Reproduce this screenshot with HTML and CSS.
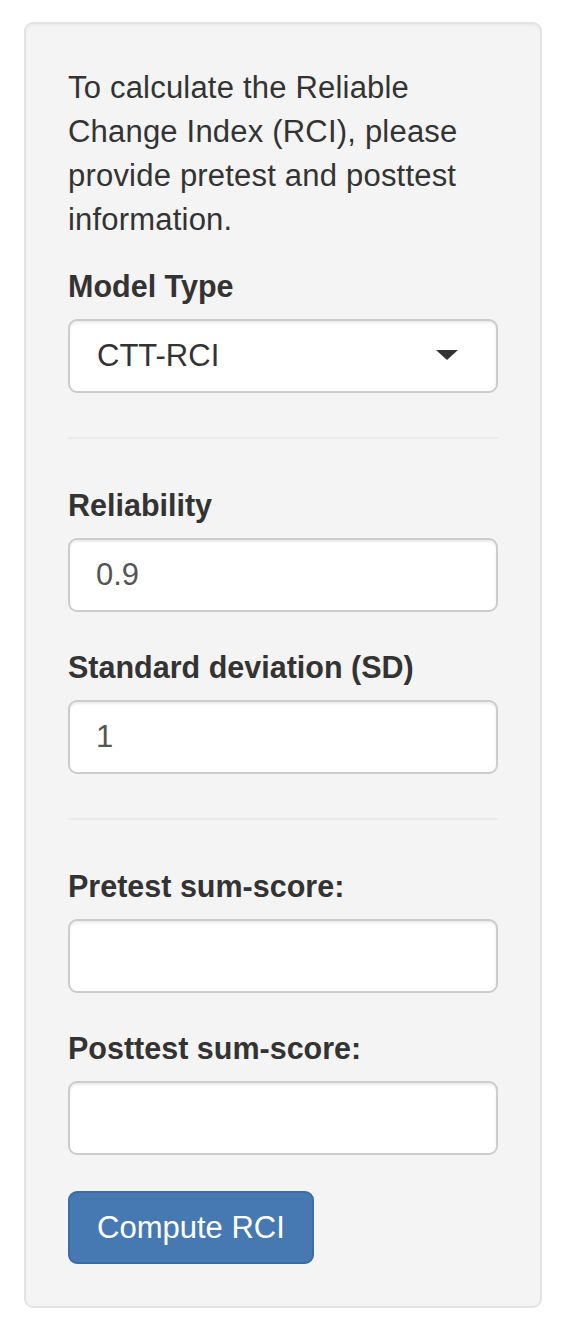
FILE: index.html
```html
<!DOCTYPE html>
<html lang="en">
<head>
<meta charset="utf-8">
<title>RCI</title>
<link rel="stylesheet" href="styles.css">
</head>
<body>
<form class="well">
  <p class="intro">To calculate the Reliable Change Index (RCI), please provide pretest and posttest information.</p>
  <div class="form-group">
    <label class="label">Model Type</label>
    <div class="select"><span class="select-value">CTT-RCI</span><span class="caret"></span></div>
  </div>
  <hr class="rule">
  <div class="form-group">
    <label class="label" for="rel">Reliability</label>
    <input class="input" id="rel" type="text" value="0.9">
  </div>
  <div class="form-group">
    <label class="label" for="sd">Standard deviation (SD)</label>
    <input class="input" id="sd" type="text" value="1">
  </div>
  <hr class="rule">
  <div class="form-group">
    <label class="label" for="pre">Pretest sum-score:</label>
    <input class="input" id="pre" type="text" value="">
  </div>
  <div class="form-group last">
    <label class="label" for="post">Posttest sum-score:</label>
    <input class="input" id="post" type="text" value="">
  </div>
  <button class="btn" type="button">Compute RCI</button>
</form>
</body>
</html>
```
FILE: styles.css
```css
html, body {
  margin: 0;
  padding: 0;
  background: #ffffff;
}
body {
  font-family: "Liberation Sans", Arial, Helvetica, sans-serif;
  font-size: 31px;
  line-height: 44px;
  color: #333333;
}
.well {
  box-sizing: border-box;
  width: 518px;
  margin: 22px 0 0 24px;
  padding: 42px;
  background: #f4f4f4;
  border: 2px solid #e3e3e3;
  border-radius: 9px;
  box-shadow: inset 0 2px 2px rgba(0, 0, 0, 0.04);
}
.intro {
  margin: 0 0 22px;
  letter-spacing: 0.2px;
}
.form-group {
  margin-bottom: 33px;
}
.form-group.last {
  margin-bottom: 36px;
}
.label {
  display: block;
  font-weight: bold;
  font-size: 30.5px;
  margin-bottom: 11px;
}
.select {
  box-sizing: border-box;
  height: 74px;
  display: flex;
  align-items: center;
  justify-content: space-between;
  padding: 0 38px 0 27px;
  background: #ffffff;
  border: 2px solid #cccccc;
  border-radius: 9px;
  box-shadow: inset 0 2px 2px rgba(0, 0, 0, 0.075);
  color: #333333;
}
.caret {
  width: 0;
  height: 0;
  border-left: 11px solid transparent;
  border-right: 11px solid transparent;
  border-top: 10px solid #333333;
  margin-top: -2px;
}
.rule {
  margin: 44px 0;
  border: 0;
  border-top: 2px solid #ebebeb;
  height: 0;
}
.input {
  display: block;
  box-sizing: border-box;
  width: 100%;
  height: 74px;
  margin: 0;
  padding: 0 26px;
  font-family: inherit;
  font-size: 31px;
  color: #555555;
  background: #ffffff;
  border: 2px solid #cccccc;
  border-radius: 9px;
  box-shadow: inset 0 2px 2px rgba(0, 0, 0, 0.075);
  outline: none;
}
.btn {
  display: block;
  box-sizing: border-box;
  height: 73px;
  margin: 0;
  padding: 0 27px;
  font-family: inherit;
  font-size: 31px;
  color: #ffffff;
  background: #4679b2;
  border: 2px solid #3c6ca6;
  border-radius: 9px;
  cursor: pointer;
}
```
